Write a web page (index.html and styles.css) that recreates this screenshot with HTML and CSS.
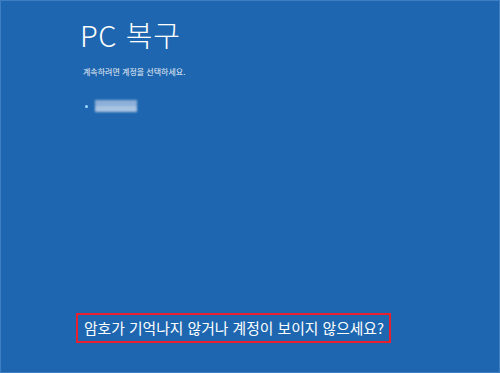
FILE: index.html
```html
<!DOCTYPE html>
<html lang="ko">
<head>
<meta charset="utf-8">
<link rel="stylesheet" href="styles.css">
</head>
<body>
<div class="screen">
  <div class="content">
    <h1 class="title">PC 복구</h1>
    <p class="subtitle">계속하려면 계정을 선택하세요.</p>
    <div class="account">
      <span class="dot"></span>
      <span class="blur"><span class="b1"></span><span class="b2"></span></span>
    </div>
  </div>
  <div class="footer">
    <div class="highlight">암호가 기억나지 않거나 계정이 보이지 않으세요?</div>
  </div>
</div>
</body>
</html>
```
FILE: styles.css
```css
html, body {
  margin: 0;
  padding: 0;
}
body {
  width: 500px;
  height: 373px;
  overflow: hidden;
  font-family: "Noto Sans CJK KR", "Noto Sans", sans-serif;
}
.screen {
  box-sizing: border-box;
  width: 500px;
  height: 373px;
  background: #1e67b0;
  border: 1px solid #3d7fc2;
  display: flex;
  flex-direction: column;
  justify-content: space-between;
  color: #fff;
}
.content {
  padding: 13px 0 0 79px;
}
.title {
  margin: 0;
  font-weight: 300;
  font-size: 29px;
  line-height: 40px;
  letter-spacing: 0.6px;
}
.subtitle {
  margin: 12px 0 0 3px;
  font-size: 8px;
  line-height: 12px;
  color: #e8eef6;
}
.account {
  margin: 22px 0 0 5px;
  display: flex;
  align-items: center;
  gap: 7px;
}
.dot {
  width: 3px;
  height: 3px;
  border-radius: 50%;
  background: #9fd8ff;
}
.blur {
  display: flex;
  flex-direction: column;
  width: 42px;
  filter: blur(1px);
}
.b1 {
  height: 6px;
  background: #8cb0d8;
}
.b2 {
  height: 6px;
  background: #a9c3e2;
}
.footer {
  padding: 0 0 29px 75px;
}
.highlight {
  display: inline-block;
  border: 2px solid #e8212e;
  padding: 3px 5px 3px 6px;
  font-size: 14.8px;
  line-height: 20px;
  color: #fff;
}
```
